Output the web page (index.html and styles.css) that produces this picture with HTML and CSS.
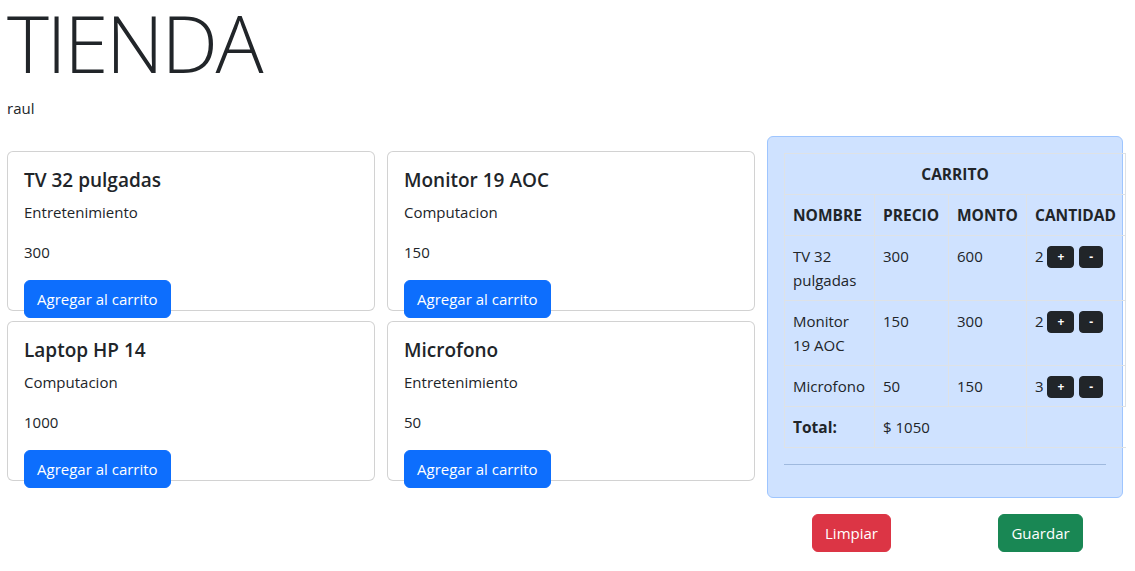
FILE: index.html
```html
<!DOCTYPE html>
<html lang="es">
<head>
<meta charset="utf-8">
<title>Tienda</title>
<link rel="stylesheet" href="styles.css">
</head>
<body>
<div class="page">
  <h1 class="title">TIENDA</h1>
  <p class="user">raul</p>
  <div class="layout">
    <div class="products">
      <div class="card">
        <h5 class="card-title">TV 32 pulgadas</h5>
        <p class="card-text">Entretenimiento</p>
        <p class="card-text">300</p>
        <button class="btn btn-primary">Agregar al carrito</button>
      </div>
      <div class="card">
        <h5 class="card-title">Monitor 19 AOC</h5>
        <p class="card-text">Computacion</p>
        <p class="card-text">150</p>
        <button class="btn btn-primary">Agregar al carrito</button>
      </div>
      <div class="card">
        <h5 class="card-title">Laptop HP 14</h5>
        <p class="card-text">Computacion</p>
        <p class="card-text">1000</p>
        <button class="btn btn-primary">Agregar al carrito</button>
      </div>
      <div class="card">
        <h5 class="card-title">Microfono</h5>
        <p class="card-text">Entretenimiento</p>
        <p class="card-text">50</p>
        <button class="btn btn-primary">Agregar al carrito</button>
      </div>
    </div>
    <div class="side">
      <div class="cart">
        <table class="cart-table">
          <colgroup>
            <col class="col-nombre">
            <col class="col-precio">
            <col class="col-monto">
            <col class="col-cantidad">
          </colgroup>
          <thead>
            <tr><th colspan="4" class="caption">CARRITO</th></tr>
            <tr><th>NOMBRE</th><th>PRECIO</th><th>MONTO</th><th>CANTIDAD</th></tr>
          </thead>
          <tbody>
            <tr>
              <td>TV 32 pulgadas</td><td>300</td><td>600</td>
              <td>2 <button class="mini">+</button> <button class="mini">-</button></td>
            </tr>
            <tr>
              <td>Monitor 19 AOC</td><td>150</td><td>300</td>
              <td>2 <button class="mini">+</button> <button class="mini">-</button></td>
            </tr>
            <tr>
              <td>Microfono</td><td>50</td><td>150</td>
              <td>3 <button class="mini">+</button> <button class="mini">-</button></td>
            </tr>
            <tr class="total-row">
              <th>Total:</th><td colspan="2">$ 1050</td><td class="no-right"></td>
            </tr>
          </tbody>
        </table>
        <hr class="divider">
      </div>
      <div class="actions">
        <div class="action"><button class="btn btn-danger">Limpiar</button></div>
        <div class="action"><button class="btn btn-success">Guardar</button></div>
      </div>
    </div>
  </div>
</div>
</body>
</html>
```

FILE: styles.css
```css
* {
  box-sizing: border-box;
}

body {
  margin: 0;
  font-family: "Open Sans", "Noto Sans", "Liberation Sans", sans-serif;
  font-size: 16px;
  line-height: 1.5;
  color: #212529;
  background: #fff;
}

.page {
  padding: 0 0 0 7px;
}

.title {
  margin: 0;
  font-size: 80px;
  font-weight: 300;
  line-height: 84px;
  letter-spacing: -2.4px;
}

.user {
  margin: 12px 0 16px 0;
  font-size: 15px;
  line-height: 24px;
}

.layout {
  display: flex;
  align-items: flex-start;
  gap: 12px;
}

.products {
  width: 748px;
  margin-top: 15px;
  display: grid;
  grid-template-columns: 1fr 1fr;
  column-gap: 12px;
  row-gap: 10px;
}

.card {
  height: 160px;
  border: 1px solid rgba(0, 0, 0, 0.175);
  border-radius: 6px;
  padding: 16px;
  background: #fff;
}

.card-title {
  margin: 0 0 8px;
  font-size: 19px;
  font-weight: 600;
  line-height: 24px;
}

.card-text {
  margin: 0 0 16px;
  font-size: 15px;
  line-height: 24px;
}

.btn {
  font-family: inherit;
  font-size: 15px;
  line-height: 24px;
  padding: 6px 12px;
  border: 1px solid transparent;
  border-radius: 6px;
  color: #fff;
  cursor: pointer;
}

.btn-primary {
  background: #0d6efd;
  border-color: #0d6efd;
}

.btn-danger {
  background: #dc3545;
  border-color: #dc3545;
}

.btn-success {
  background: #198754;
  border-color: #198754;
}

.side {
  width: 356px;
}

.cart {
  background: #cfe2ff;
  border: 1px solid #9ec5fe;
  border-radius: 6px;
  padding: 16px;
}

.cart-table {
  border-collapse: collapse;
  table-layout: fixed;
  width: 341px;
  font-size: 15px;
}

.col-nombre { width: 90px; }
.col-precio { width: 74px; }
.col-monto { width: 78px; }
.col-cantidad { width: 99px; }

.cart-table th,
.cart-table td {
  border: 1px solid #dee2e6;
  padding: 8px;
  line-height: 24px;
  text-align: left;
  vertical-align: top;
  white-space: normal;
}

.cart-table th {
  font-weight: 700;
  font-size: 15.5px;
}

.cart-table .caption {
  text-align: center;
}

.cart-table .no-right {
  border-right-color: transparent;
}

.mini {
  font-family: inherit;
  font-size: 12px;
  font-weight: 700;
  line-height: 18px;
  padding: 1px 9px;
  border: 1px solid #212529;
  border-radius: 4px;
  background: #212529;
  color: #fff;
  vertical-align: 1px;
}

.mini + .mini {
  margin-left: 1px;
}

.divider {
  margin: 16px 0;
  border: 0;
  border-top: 1px solid #9fb9de;
}

.actions {
  display: grid;
  grid-template-columns: 1fr 1fr;
  margin: 16px -12px 0 -10px;
  justify-items: center;
}
```
